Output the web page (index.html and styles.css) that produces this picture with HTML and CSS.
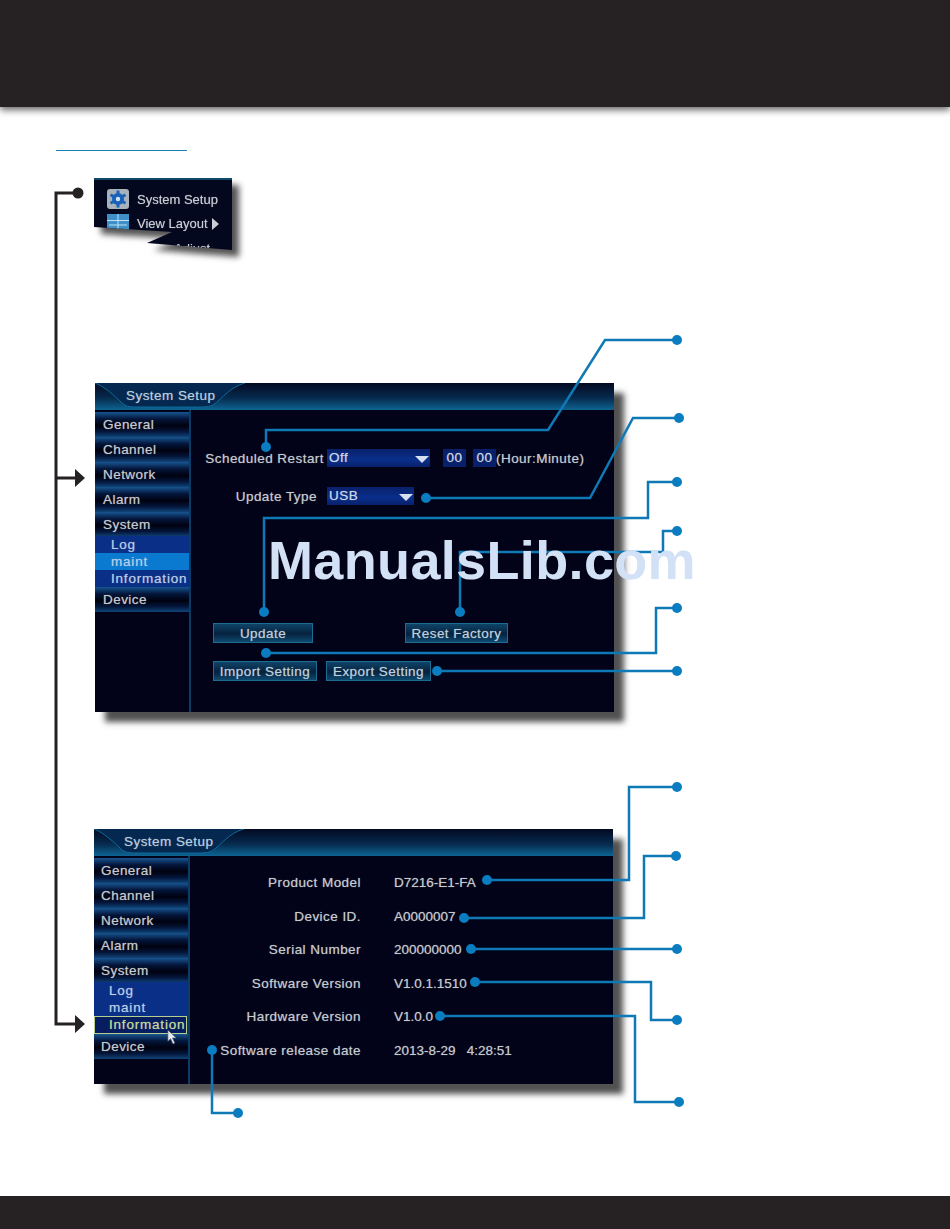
FILE: index.html
```html
<!DOCTYPE html>
<html lang="en">
<head>
    <meta charset="UTF-8">
    <meta name="viewport" content="width=device-width, initial-scale=1.0">
    <title>System Setup</title>
    <link rel="stylesheet" href="styles.css">
</head>
<body>
    <div class="page">
        <header class="top-bar"></header>

        <main class="figure">
            <div class="rule"></div>

            <div class="menu-wrap">
                <div class="menu">
                    <div class="menu-row">
                        <svg class="menu-icon" viewBox="0 0 22 20">
                            <rect width="22" height="20" rx="3" fill="#a9b2bb"/>
                            <circle cx="11" cy="10" r="6" fill="#1a62b8"/>
                            <path d="M11 1.500v4M11 14.500v4M3.500 5.700l3.500 2M15 12.300l3.500 2M3.500 14.300l3.500-2M15 7.700l3.500-2" stroke="#1a62b8" stroke-width="3"/>
                            <circle cx="11" cy="10" r="2.200" fill="#cfe3f5"/>
                        </svg>
                        <span>System Setup</span>
                    </div>
                    <div class="menu-row">
                        <svg class="menu-icon" viewBox="0 0 22 20">
                            <rect width="22" height="20" fill="#3f8fc8"/>
                            <path d="M0 6.500h22M2 11h18" stroke="#bfe3f5" stroke-width="1"/>
                            <path d="M11 0v20" stroke="#bfe3f5" stroke-width="1"/>
                        </svg>
                        <span>View Layout</span>
                        <i class="menu-arrow"></i>
                    </div>
                    <div class="menu-row menu-row-cut"><span>Adjust</span></div>
                </div>
            </div>

            <section class="screen screen-maint">
                <div class="title-bar">
                    <svg class="title-tab" viewBox="0 0 150 27" preserveAspectRatio="none">
                        <path d="M0 0H150C135 4 128 15 118 22Q114 24 108 24H38Q32 24 28 21C20 13 10 4 0 0Z" fill="#04284f"/>
                        <path d="M150 0C135 4 128 15 118 22Q114 24 108 24H38Q32 24 28 21C20 13 10 4 0 0" fill="none" stroke="#0f6a9c"/>
                    </svg>
                    <span class="title-text">System Setup</span>
                </div>
                <div class="screen-body">
                    <nav class="side">
                        <div class="side-item">General</div>
                        <div class="side-item">Channel</div>
                        <div class="side-item">Network</div>
                        <div class="side-item">Alarm</div>
                        <div class="side-item">System</div>
                        <div class="side-sub">
                            <div class="sub-item">Log</div>
                            <div class="sub-item sub-active">maint</div>
                            <div class="sub-item">Information</div>
                        </div>
                        <div class="side-item">Device</div>
                    </nav>
                    <div class="maint">
                        <div class="form-row">
                            <label class="form-label">Scheduled Restart</label>
                            <div class="select select-wide">Off<i class="select-caret"></i></div>
                            <div class="time-box">00</div>
                            <div class="time-box">00</div>
                            <span class="time-hint">(Hour:Minute)</span>
                        </div>
                        <div class="form-row">
                            <label class="form-label form-label-short">Update Type</label>
                            <div class="select select-narrow">USB<i class="select-caret"></i></div>
                        </div>
                        <div class="button-row button-row-first">
                            <div class="btn btn-update">Update</div>
                            <div class="btn btn-reset">Reset Factory</div>
                        </div>
                        <div class="button-row">
                            <div class="btn btn-import">Import Setting</div>
                            <div class="btn btn-export">Export Setting</div>
                        </div>
                    </div>
                </div>
            </section>

            <section class="screen screen-info">
                <div class="title-bar">
                    <svg class="title-tab" viewBox="0 0 150 27" preserveAspectRatio="none">
                        <path d="M0 0H150C135 4 128 15 118 22Q114 24 108 24H38Q32 24 28 21C20 13 10 4 0 0Z" fill="#04284f"/>
                        <path d="M150 0C135 4 128 15 118 22Q114 24 108 24H38Q32 24 28 21C20 13 10 4 0 0" fill="none" stroke="#0f6a9c"/>
                    </svg>
                    <span class="title-text">System Setup</span>
                </div>
                <div class="screen-body">
                    <nav class="side">
                        <div class="side-item">General</div>
                        <div class="side-item">Channel</div>
                        <div class="side-item">Network</div>
                        <div class="side-item">Alarm</div>
                        <div class="side-item">System</div>
                        <div class="side-sub side-sub-info">
                            <div class="sub-item">Log</div>
                            <div class="sub-item">maint</div>
                            <div class="sub-item sub-hover">Information
                                <svg class="cursor" viewBox="0 0 12 17">
                                    <path d="M1 1V13L4 10.500L6.500 16L8.500 15L6 9.500H10Z" fill="#e8ecf2" stroke="#55606e" stroke-width=".7"/>
                                </svg>
                            </div>
                        </div>
                        <div class="side-item">Device</div>
                    </nav>
                    <dl class="info">
                        <dt>Product Model</dt><dd>D7216-E1-FA</dd>
                        <dt>Device ID.</dt><dd>A0000007</dd>
                        <dt>Serial Number</dt><dd>200000000</dd>
                        <dt>Software Version</dt><dd>V1.0.1.1510</dd>
                        <dt>Hardware Version</dt><dd>V1.0.0</dd>
                        <dt>Software release date</dt><dd>2013-8-29&nbsp;&nbsp; 4:28:51</dd>
                    </dl>
                </div>
            </section>
        </main>

        <footer class="bottom-bar"></footer>

        <!-- callout lines, in page coordinates -->
        <svg class="callouts" viewBox="0 0 950 1229">
            <g class="lead-dark">
                <path d="M78 193H56V1024H76M56 478H76"/>
                <circle cx="78" cy="193" r="5.500"/>
                <path class="head" d="M75 469L85 478L75 487ZM75 1015L85 1024L75 1033Z"/>
            </g>
            <g class="lead">
                <path d="M677 340H605L548 430H266V447"/>
                <path d="M678 418H633L590 498H426"/>
                <path d="M677 482H648V518H264V612"/>
                <path d="M677 531H663V552H460V612"/>
                <path d="M677 608H656V653H266"/>
                <path d="M677 671H437"/>
                <path d="M677 787H629V880H487"/>
                <path d="M676 856H644V918H464"/>
                <path d="M677 949H471"/>
                <path d="M677 1020H651V982H475"/>
                <path d="M679 1102H635V1016H440"/>
                <path d="M212 1050V1113H238"/>
            </g>
            <g class="dots">
                <circle cx="677" cy="340" r="5"/><circle cx="266" cy="447" r="5"/>
                <circle cx="679" cy="418" r="5"/><circle cx="426" cy="498" r="5"/>
                <circle cx="677" cy="482" r="5"/><circle cx="264" cy="612" r="5"/>
                <circle cx="677" cy="531" r="5"/><circle cx="460" cy="612" r="5"/>
                <circle cx="677" cy="608" r="5"/><circle cx="266" cy="653" r="5"/>
                <circle cx="677" cy="671" r="5"/><circle cx="437" cy="671" r="5"/>
                <circle cx="677" cy="787" r="5"/><circle cx="487" cy="880" r="5"/>
                <circle cx="676" cy="856" r="5"/><circle cx="464" cy="918" r="5"/>
                <circle cx="677" cy="949" r="5"/><circle cx="471" cy="949" r="5"/>
                <circle cx="677" cy="1020" r="5"/><circle cx="475" cy="982" r="5"/>
                <circle cx="679" cy="1102" r="5"/><circle cx="440" cy="1016" r="5"/>
                <circle cx="212" cy="1050" r="5"/><circle cx="238" cy="1113" r="5"/>
            </g>
        </svg>

        <div class="watermark">ManualsLib.com</div>
    </div>
</body>
</html>
```

FILE: styles.css
```css
body {
    margin: 0;
    padding: 0;
    background-color: #ffffff;
    font-family: "Liberation Sans", Arial, sans-serif;
}
.page {
    position: relative;
    width: 950px;
    height: 1229px;
    display: flex;
    flex-direction: column;
    overflow: hidden;
}
.top-bar {
    height: 107px;
    flex: none;
    background-color: #262223;
    box-shadow: 0 3px 7px rgba(0, 0, 0, 0.6);
}
.bottom-bar {
    height: 33px;
    flex: none;
    background-color: #262223;
}
.figure {
    flex: 1;
    display: flex;
    flex-direction: column;
    align-items: flex-start;
}
.rule {
    width: 131px;
    height: 1px;
    margin: 43px 0 0 56px;
    background-color: #1b7fb5;
}

/* context menu, torn off at the bottom */
.menu-wrap {
    margin: 27px 0 0 94px;
    filter: drop-shadow(7px 7px 3px rgba(40, 40, 40, 0.8));
}
.menu {
    width: 138px;
    height: 72px;
    box-sizing: border-box;
    padding-top: 7px;
    background-color: #04081f;
    border-top: 2px solid #0f4a68;
    color: #c9ced4;
    font-size: 13px;
    text-shadow: 0 0 1px rgba(200, 205, 212, 0.6);
    clip-path: polygon(0 0, 138px 0, 138px 72px, 53px 65px, 78px 54px, 0 49px);
}
.menu-row {
    display: flex;
    align-items: center;
    height: 24.500px;
    padding-left: 13px;
}
.menu-row span {
    margin-left: 8px;
}
.menu-row-cut span {
    margin-left: 67px;
}
.menu-icon {
    width: 22px;
    height: 20px;
    flex: none;
}
.menu-arrow {
    width: 0;
    height: 0;
    margin-left: 4px;
    border-left: 7px solid #c9ced4;
    border-top: 6px solid transparent;
    border-bottom: 6px solid transparent;
}

/* DVR screens */
.screen {
    position: relative;
    width: 519px;
    background-color: #020318;
    box-shadow: 10px 10px 6px rgba(50, 50, 50, 0.85);
    color: #c6cacf;
    font-size: 13.500px;
    letter-spacing: 0.45px;
    text-shadow: 0 0 1px rgba(200, 205, 212, 0.6);
}
.screen-maint {
    height: 329px;
    margin: 133px 0 0 95px;
}
.screen-info {
    height: 255px;
    margin: 117px 0 0 94px;
}
.title-bar {
    position: relative;
    height: 27px;
    background: linear-gradient(#030a22, #062a4d 55%, #0e6492);
}
.title-tab {
    position: absolute;
    left: 0;
    top: 0;
    width: 150px;
    height: 27px;
}
.title-text {
    position: absolute;
    left: 31px;
    top: 5px;
    color: #b8cde0;
}
.screen-info .title-text {
    left: 30px;
}
.screen-body {
    display: flex;
    height: calc(100% - 27px);
}
.side {
    width: 94px;
    flex: none;
    padding-top: 2px;
    border-right: 2px solid #0b3c66;
}
.side-item {
    height: 25px;
    line-height: 25px;
    padding-left: 8px;
    background: linear-gradient(#175590, #04153a 28%, #00010f 55%, #04153a 78%, #104478);
}
.screen-info .side-item {
    padding-left: 7px;
}
.side-sub {
    height: 51px;
    margin-top: -1px;
    background-color: #0a2f86;
    color: #b9cdea;
}
.side-sub-info {
    height: 52px;
}
.sub-item {
    position: relative;
    height: 17px;
    line-height: 17px;
    padding-left: 16px;
    letter-spacing: 0.8px;
    white-space: nowrap;
}
.screen-info .sub-item {
    padding-left: 15px;
}
.sub-active {
    background-color: #0a7ad0;
}
.screen-info .sub-hover {
    box-sizing: border-box;
    height: 18px;
    margin-right: 1px;
    padding-left: 14px;
    line-height: 16px;
    background-color: #061d60;
    border: 1px solid #b6cf8f;
    color: #c5dc92;
}
.cursor {
    position: absolute;
    left: 72px;
    top: 12px;
    width: 11px;
    height: 16px;
}

/* maint form */
.maint {
    flex: 1;
    padding-top: 39px;
}
.form-row {
    display: flex;
    align-items: center;
    height: 18px;
    margin-bottom: 20px;
}
.form-label {
    width: 133px;
    text-align: right;
    margin-right: 3px;
    white-space: nowrap;
}
.form-label-short {
    width: 126px;
    margin-right: 10px;
}
.select {
    position: relative;
    height: 18px;
    line-height: 18px;
    padding-left: 2px;
    box-sizing: border-box;
    background: linear-gradient(#08206a, #0a2f8c 60%, #08206a);
    color: #cdd8ea;
}
.select-wide {
    width: 103px;
    margin-right: 13px;
}
.select-narrow {
    width: 87px;
}
.select-caret {
    position: absolute;
    right: 1px;
    top: 7px;
    width: 0;
    height: 0;
    border-left: 7px solid transparent;
    border-right: 7px solid transparent;
    border-top: 7px solid #d5dff0;
}
.time-box {
    width: 23px;
    height: 18px;
    line-height: 17px;
    margin-right: 7px;
    text-align: center;
    background-color: #08206a;
    color: #cdd8ea;
}
.time-box + .time-box {
    margin-right: 0;
}
.time-hint {
    white-space: nowrap;
}
.button-row {
    display: flex;
    margin-left: 22px;
    margin-bottom: 18px;
}
.button-row-first {
    margin-top: 118px;
}
.btn {
    box-sizing: border-box;
    height: 20px;
    line-height: 20px;
    text-align: center;
    white-space: nowrap;
    background: linear-gradient(#0f4468, #06223f 55%, #0e4a70);
    border: 1px solid #1d6c92;
    color: #bcd0de;
}
.btn-update {
    width: 100px;
    margin-right: 92px;
}
.btn-reset {
    width: 103px;
}
.btn-import {
    width: 104px;
    margin-right: 9px;
}
.btn-export {
    width: 105px;
}

/* system information */
.info {
    flex: 1;
    margin: 0;
    padding-top: 10px;
    display: grid;
    grid-template-columns: 171px 1fr;
    grid-auto-rows: 33.500px;
    align-items: center;
}
.info dt {
    text-align: right;
    white-space: nowrap;
}
.info dd {
    margin: 0 0 0 33px;
    white-space: nowrap;
    letter-spacing: 0;
}

/* overlays */
.callouts {
    position: absolute;
    left: 0;
    top: 0;
    width: 950px;
    height: 1229px;
    fill: none;
}
.lead path {
    stroke: #0f79b6;
    stroke-width: 2.500;
}
.dots circle {
    fill: #0a7cc0;
}
.lead-dark path {
    stroke: #262223;
    stroke-width: 3;
}
.lead-dark circle,
.lead-dark .head {
    fill: #262223;
    stroke: none;
}
.watermark {
    position: absolute;
    left: 268px;
    top: 529px;
    font-size: 54px;
    line-height: 62px;
    font-weight: bold;
    letter-spacing: 0.35px;
    color: #d2e1f6;
    white-space: nowrap;
}
```
